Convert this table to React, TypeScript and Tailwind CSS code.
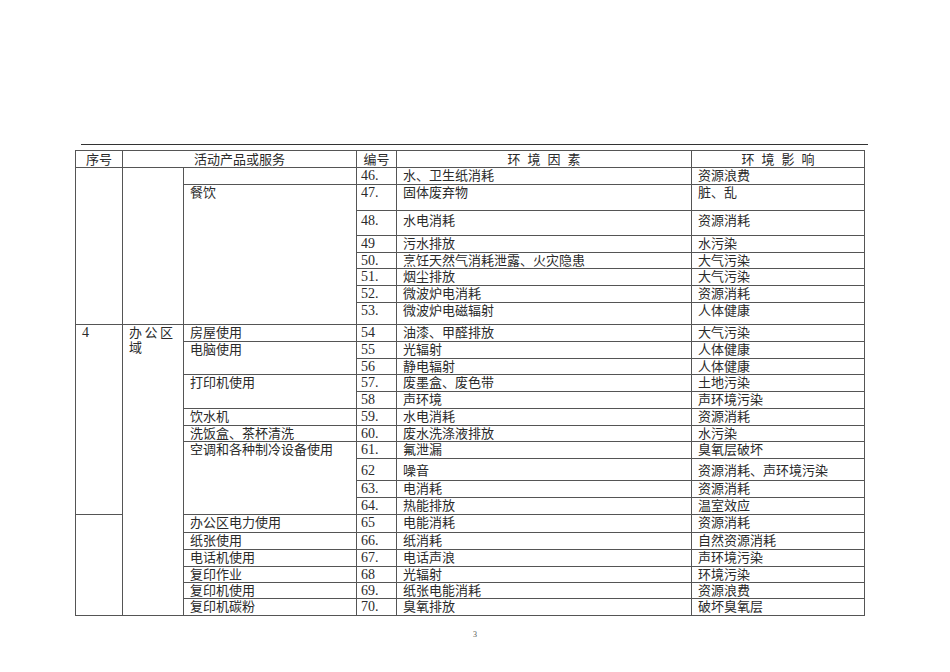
import React from 'react';

type Cell = { span: number; text?: React.ReactNode };
type Row = {
  h: string;
  pt?: string;
  a?: Cell;
  b?: Cell;
  c?: Cell;
  n: string;
  f: string;
  i: string;
};

const rows: Row[] = [
  { h: 'h-[17px]', a: { span: 8 }, b: { span: 8 }, c: { span: 1 }, n: '46.', f: '水、卫生纸消耗', i: '资源浪费' },
  { h: 'h-[26px]', c: { span: 7, text: '餐饮' }, n: '47.', f: '固体废弃物', i: '脏、乱' },
  { h: 'h-[25px]', pt: 'pt-[2px]', n: '48.', f: '水电消耗', i: '资源消耗' },
  { h: 'h-[17px]', n: '49', f: '污水排放', i: '水污染' },
  { h: 'h-[16px]', n: '50.', f: '烹饪天然气消耗泄露、火灾隐患', i: '大气污染' },
  { h: 'h-[17px]', n: '51.', f: '烟尘排放', i: '大气污染' },
  { h: 'h-[17px]', n: '52.', f: '微波炉电消耗', i: '资源消耗' },
  { h: 'h-[22px]', n: '53.', f: '微波炉电磁辐射', i: '人体健康' },
  {
    h: 'h-[17px]',
    a: { span: 11, text: <span className="text-[14px]">4</span> },
    b: {
      span: 17,
      text: (
        <>
          <span className="flex w-[44px] justify-between">
            <span>办</span>
            <span>公</span>
            <span>区</span>
          </span>
          <span className="block">域</span>
        </>
      ),
    },
    c: { span: 1, text: '房屋使用' },
    n: '54',
    f: '油漆、甲醛排放',
    i: '大气污染',
  },
  { h: 'h-[17px]', c: { span: 2, text: '电脑使用' }, n: '55', f: '光辐射', i: '人体健康' },
  { h: 'h-[16px]', n: '56', f: '静电辐射', i: '人体健康' },
  { h: 'h-[17px]', c: { span: 2, text: '打印机使用' }, n: '57.', f: '废墨盒、废色带', i: '土地污染' },
  { h: 'h-[17px]', n: '58', f: '声环境', i: '声环境污染' },
  { h: 'h-[17px]', c: { span: 1, text: '饮水机' }, n: '59.', f: '水电消耗', i: '资源消耗' },
  { h: 'h-[16px]', c: { span: 1, text: '洗饭盒、茶杯清洗' }, n: '60.', f: '废水洗涤液排放', i: '水污染' },
  { h: 'h-[17px]', c: { span: 4, text: '空调和各种制冷设备使用' }, n: '61.', f: '氟泄漏', i: '臭氧层破坏' },
  { h: 'h-[22px]', pt: 'pt-[4px]', n: '62', f: '噪音', i: '资源消耗、声环境污染' },
  { h: 'h-[17px]', n: '63.', f: '电消耗', i: '资源消耗' },
  { h: 'h-[17px]', n: '64.', f: '热能排放', i: '温室效应' },
  { h: 'h-[18px]', a: { span: 6 }, c: { span: 1, text: '办公区电力使用' }, n: '65', f: '电能消耗', i: '资源消耗' },
  { h: 'h-[17px]', c: { span: 1, text: '纸张使用' }, n: '66.', f: '纸消耗', i: '自然资源消耗' },
  { h: 'h-[17px]', c: { span: 1, text: '电话机使用' }, n: '67.', f: '电话声浪', i: '声环境污染' },
  { h: 'h-[16px]', c: { span: 1, text: '复印作业' }, n: '68', f: '光辐射', i: '环境污染' },
  { h: 'h-[16px]', c: { span: 1, text: '复印机使用' }, n: '69.', f: '纸张电能消耗', i: '资源浪费' },
  { h: 'h-[17px]', c: { span: 1, text: '复印机碳粉' }, n: '70.', f: '臭氧排放', i: '破坏臭氧层' },
];

const td = 'border border-[#555] p-0 px-[6px] align-top';

function Spaced({ chars }: { chars: string[] }) {
  return (
    <span className="inline-flex gap-[7px]">
      {chars.map((c, k) => (
        <span key={k}>{c}</span>
      ))}
    </span>
  );
}

export default function App() {
  return (
    <div className="min-h-[672px] w-[950px] bg-white font-['Liberation_Serif','Noto_Sans_CJK_SC',serif] text-[13px] leading-[15px] text-[#2a2a2a]">
      <div className="h-[144px]" />
      <div className="ml-[81px] h-px w-[787px] bg-[#333]" />
      <table className="ml-[75px] mt-[5px] w-[789px] table-fixed border-collapse">
        <colgroup>
          <col className="w-[47px]" />
          <col className="w-[61px]" />
          <col className="w-[173px]" />
          <col className="w-[40px]" />
          <col className="w-[295px]" />
          <col className="w-[173px]" />
        </colgroup>
        <thead>
          <tr className="h-[17px]">
            <th className="border border-[#555] p-0 pt-px text-center align-top font-normal">序号</th>
            <th colSpan={2} className="border border-[#555] p-0 pt-px text-center align-top font-normal">
              活动产品或服务
            </th>
            <th className="border border-[#555] p-0 pt-px text-center align-top font-normal">编号</th>
            <th className="border border-[#555] p-0 pt-px text-center align-top font-normal">
              <Spaced chars={['环', '境', '因', '素']} />
            </th>
            <th className="border border-[#555] p-0 pt-px text-center align-top font-normal">
              <Spaced chars={['环', '境', '影', '响']} />
            </th>
          </tr>
        </thead>
        <tbody>
          {rows.map((r, k) => (
            <tr key={k} className={r.h}>
              {r.a && (
                <td rowSpan={r.a.span} className={td}>
                  {r.a.text}
                </td>
              )}
              {r.b && (
                <td rowSpan={r.b.span} className={td}>
                  {r.b.text}
                </td>
              )}
              {r.c && (
                <td rowSpan={r.c.span} className={td}>
                  {r.c.text}
                </td>
              )}
              <td className={`border border-[#555] p-0 pl-[4px] align-top text-[14px] ${r.pt ?? ''}`}>{r.n}</td>
              <td className={`${td} ${r.pt ?? ''}`}>{r.f}</td>
              <td className={`${td} ${r.pt ?? ''}`}>{r.i}</td>
            </tr>
          ))}
        </tbody>
      </table>
      <div className="mt-[14px] text-center text-[8px] leading-[10px] text-[#555]">3</div>
    </div>
  );
}
